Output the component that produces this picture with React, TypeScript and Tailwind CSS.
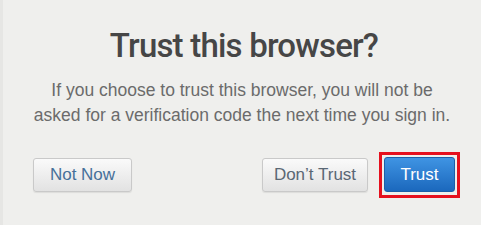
export default function App() {
  return (
    <div
      className="flex h-[225px] w-[481px] flex-col items-center border-l-[3px] border-[#e6e6e4] bg-[#efefed]"
      style={{ fontFamily: '"Liberation Sans", Arial, sans-serif' }}
    >
      <h1 className="mt-[26px] pl-[4px] font-['Roboto',sans-serif] text-[33px] font-medium leading-[40px] tracking-[-0.8px] text-[#464646]">
        Trust this browser?
      </h1>
      <p className="mt-[12px] text-center text-[17.5px] leading-[25px] text-[#6b6b6b]">
        If you choose to trust this browser, you will not be
        <br />
        asked for a verification code the next time you sign in.
      </p>
      <div className="mt-[24px] flex w-full items-center justify-between pl-[30px] pr-[21px]">
        <button className="h-[34px] w-[99px] rounded-[3px] border border-[#c9c9c9] bg-gradient-to-b from-[#fafafa] to-[#e2e2e2] text-[17px] text-[#46709a] shadow-[0_1px_1px_rgba(0,0,0,0.08)]">
          Not Now
        </button>
        <div className="flex items-center gap-[11px]">
          <button className="h-[34px] w-[106px] rounded-[3px] border border-[#c9c9c9] bg-gradient-to-b from-[#fafafa] to-[#e2e2e2] text-[17px] text-[#5a6774] shadow-[0_1px_1px_rgba(0,0,0,0.08)]">
            Don’t Trust
          </button>
          <div className="border-[3px] border-[#e5101e] px-[2px] pb-[3px] pt-[2px]">
            <button className="block h-[35px] w-[71px] rounded-[3px] border border-[#1c5fa8] bg-gradient-to-b from-[#3f94e3] to-[#1b68bd] text-[17px] text-white">
              Trust
            </button>
          </div>
        </div>
      </div>
    </div>
  );
}
